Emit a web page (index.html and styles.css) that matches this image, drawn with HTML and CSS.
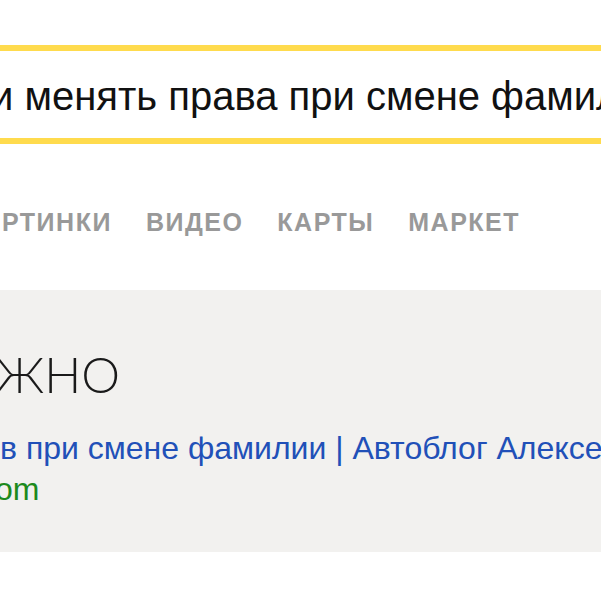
FILE: index.html
```html
<!DOCTYPE html>
<html lang="ru">
<head>
<meta charset="utf-8">
<link rel="stylesheet" href="styles.css">
</head>
<body>
<div class="page">
  <div class="search">
    <span class="search-text">и менять права при смене фамилии</span>
  </div>
  <nav class="tabs">
    <span class="tab">ртинки</span>
    <span class="tab">видео</span>
    <span class="tab">карты</span>
    <span class="tab">маркет</span>
  </nav>
  <section class="panel">
    <h1 class="title">ЖНО</h1>
    <a class="link" href="#">в при смене фамилии | Автоблог Алексея</a>
    <div class="url">om</div>
  </section>
</div>
</body>
</html>
```

FILE: styles.css
```css
html, body {
  margin: 0;
  padding: 0;
  background: #ffffff;
}
.page {
  width: 601px;
  height: 600px;
  overflow: hidden;
  font-family: "Liberation Sans", Arial, sans-serif;
}
.search {
  margin-top: 45px;
  height: 87px;
  border-top: 6px solid #ffdb4d;
  border-bottom: 6px solid #ffdb4d;
  display: flex;
  align-items: center;
  overflow: hidden;
  white-space: nowrap;
}
.search-text {
  font-size: 40px;
  line-height: 46px;
  padding-top: 3px;
  color: #111111;
  margin-left: -9px;
}
.tabs {
  display: flex;
  gap: 34px;
  margin-top: 63px;
  white-space: nowrap;
}
.tab {
  font-size: 25px;
  font-weight: bold;
  letter-spacing: 1.5px;
  text-transform: uppercase;
  color: #999999;
  line-height: 31px;
}
.tabs .tab:first-child {
  margin-left: 2px;
}
.panel {
  margin-top: 52px;
  height: 262px;
  background: #f2f1ef;
  overflow: hidden;
  white-space: nowrap;
}
.title {
  margin: 0;
  padding-top: 56px;
  font-family: Lato, Roboto, sans-serif;
  font-weight: 300;
  font-size: 49px;
  line-height: 56px;
  color: #1a1a1a;
  margin-left: -5px;
}
.link {
  display: block;
  margin-top: 28px;
  font-size: 32px;
  line-height: 36px;
  color: #2150b8;
  text-decoration: none;
}
.url {
  margin-top: 4px;
  font-size: 32px;
  line-height: 38px;
  color: #1d8a1d;
  margin-left: -5px;
}
```
